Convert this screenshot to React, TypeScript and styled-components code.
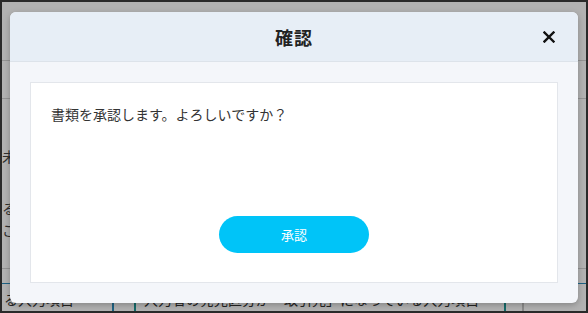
import styled, { createGlobalStyle } from 'styled-components';

const GlobalStyle = createGlobalStyle`
	html, body {
		margin: 0;
		padding: 0;
		background: #b4b4b4;
	}
	* {
		box-sizing: border-box;
	}
`;

const Frame = styled.div`
	position: relative;
	width: 588px;
	height: 313px;
	overflow: hidden;
	border: 2px solid #2a2a2a;
	background: #ffffff;
	font-family: 'Noto Sans CJK JP', 'Noto Sans', sans-serif;
`;

const Page = styled.div`
	display: flex;
	flex-direction: column;
	height: 100%;
	color: #333;
	font-size: 14px;
`;

const PageRow = styled.div<{ $h: number; $line?: string }>`
	height: ${(p) => p.$h}px;
	flex: none;
	border-bottom: 1px solid ${(p) => p.$line || '#d4d4d4'};
	display: flex;
	align-items: center;
	white-space: nowrap;
	padding-left: 2px;
`;

const Block = styled.div`
	height: 170px;
	flex: none;
	border-bottom: 1px solid #d4d4d4;
	display: flex;
	flex-direction: column;
	padding: 46px 0 0 0;
	line-height: 20px;
	color: #444;
	gap: 30px;
`;

const BlockText = styled.div`
	display: flex;
	flex-direction: column;
	line-height: 22px;
`;

const Cell = styled.div<{ $w?: number; $edge?: string }>`
	width: ${(p) => (p.$w ? `${p.$w}px` : 'auto')};
	height: 100%;
	display: flex;
	align-items: center;
	border-right: ${(p) => (p.$edge ? `2px solid ${p.$edge}` : 'none')};
	padding-left: 8px;
	&:first-child {
		padding-left: 0;
	}
`;

const Overlay = styled.div`
	position: absolute;
	inset: 0;
	background: rgba(0, 0, 0, 0.3);
	display: flex;
	padding: 10px 8px 8px 8px;
`;

const Modal = styled.div`
	width: 568px;
	height: 291px;
	background: #f4f6fa;
	border-radius: 6px;
	box-shadow: 0 2px 6px rgba(0, 0, 0, 0.25);
	display: flex;
	flex-direction: column;
	overflow: hidden;
`;

const Header = styled.div`
	height: 50px;
	flex: none;
	background: #e7eef6;
	border-bottom: 1px solid #dde3ea;
	display: grid;
	grid-template-columns: 1fr auto 1fr;
	align-items: center;
	padding: 0 24px;
`;

const Title = styled.h2`
	grid-column: 2;
	margin: 0;
	font-size: 18px;
	font-weight: 700;
	color: #222;
	letter-spacing: 1px;
`;

const CloseButton = styled.button`
	grid-column: 3;
	justify-self: end;
	background: none;
	border: none;
	padding: 0;
	width: 14px;
	height: 14px;
	display: flex;
	align-items: center;
	justify-content: center;
	cursor: pointer;
	margin-right: -2px;
`;

const Body = styled.div`
	flex: 1;
	padding: 20px;
	display: flex;
`;

const Card = styled.div`
	flex: 1;
	background: #ffffff;
	border: 1px solid #e3e6eb;
	display: flex;
	flex-direction: column;
	padding: 20px 20px 29px 20px;
`;

const Message = styled.p`
	margin: 0;
	font-size: 14px;
	color: #333;
	line-height: 22px;
`;

const Actions = styled.div`
	margin-top: auto;
	display: flex;
	justify-content: center;
`;

const PrimaryButton = styled.button`
	width: 150px;
	height: 37px;
	border: none;
	border-radius: 19px;
	background: #00c4f8;
	color: #ffffff;
	font-family: inherit;
	font-size: 13px;
	cursor: pointer;
`;

const App = () => {
	return (
		<>
			<GlobalStyle />
			<Frame>
				<Page>
					<PageRow $h={59} />
					<PageRow $h={38} />
					<Block>
						<BlockText>未</BlockText>
						<BlockText>
							<span>る</span>
							<span>こ</span>
						</BlockText>
					</Block>
					<PageRow $h={15} $line="#2b8fbf" />
					<PageRow $h={30}>
						<Cell $w={110} $edge="#2b8fbf">る入力項目</Cell>
						<Cell $w={22} $edge="#1f9a9a" />
						<Cell $w={370} $edge="#1f9a9a">
							入力者の発完区分が「取引先」になっている入力項目
						</Cell>
						<Cell $w={18} $edge="#c8c8c8" />
					</PageRow>
				</Page>
				<Overlay>
					<Modal>
						<Header>
							<Title>確認</Title>
							<CloseButton aria-label="閉じる">
								<svg width="12" height="12" viewBox="0 0 12 12">
									<path
										d="M1.5 1.5 L10.5 10.5 M10.5 1.5 L1.5 10.5"
										stroke="#111"
										strokeWidth="2.4"
										strokeLinecap="square"
									/>
								</svg>
							</CloseButton>
						</Header>
						<Body>
							<Card>
								<Message>書類を承認します。よろしいですか？</Message>
								<Actions>
									<PrimaryButton>承認</PrimaryButton>
								</Actions>
							</Card>
						</Body>
					</Modal>
				</Overlay>
			</Frame>
		</>
	);
};

export default App;
